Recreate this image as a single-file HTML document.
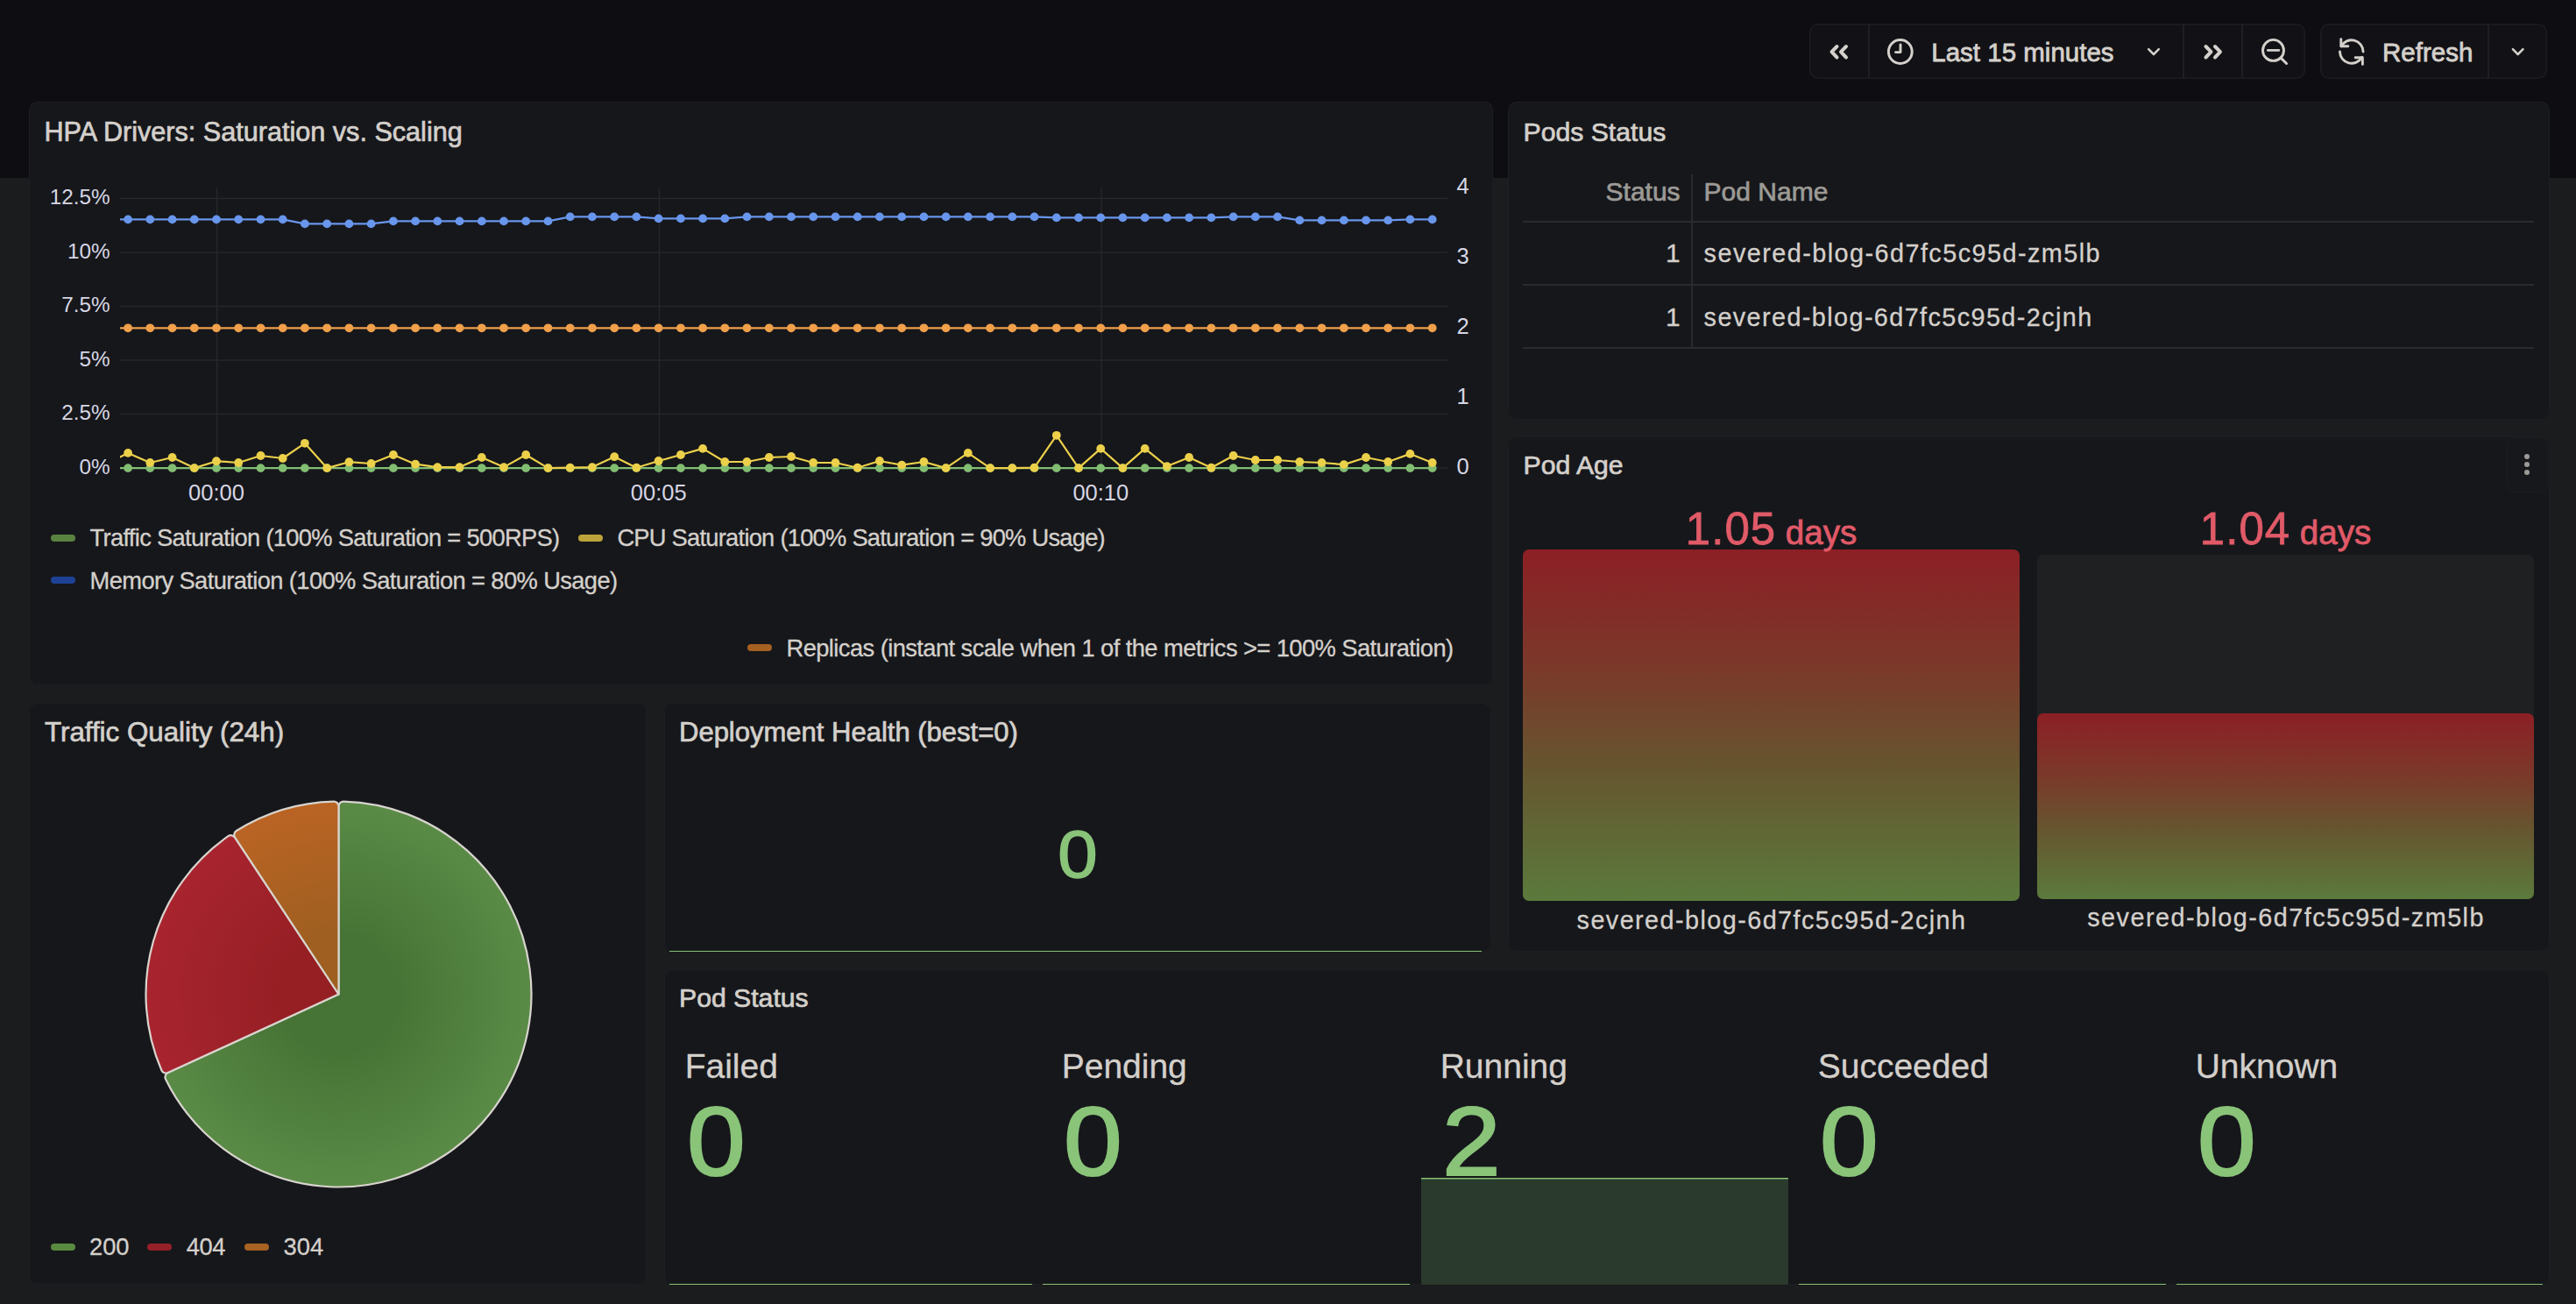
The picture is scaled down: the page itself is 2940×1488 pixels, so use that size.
<!DOCTYPE html><html><head><meta charset="utf-8"><style>
html,body{margin:0;padding:0}
body{width:2940px;height:1488px;position:relative;overflow:hidden;background:#1b1c1e;font-family:"Liberation Sans", sans-serif}
.pn{position:absolute;background:#16171b;border-radius:10px;box-shadow:inset 0 0 0 1px #1d1e22}
svg{position:absolute;left:0;top:0;overflow:visible}
</style></head><body>
<div style="position:absolute;left:0;top:0;width:2940px;height:203px;background:#0e0e12"></div>

<div style="position:absolute;left:2065px;top:27px;width:566px;height:63px;border-radius:10px;background:#121216;box-shadow:inset 0 0 0 1.5px #1d1d20"></div>
<div style="position:absolute;left:2648px;top:27px;width:259px;height:63px;border-radius:10px;background:#121216;box-shadow:inset 0 0 0 1.5px #1d1d20"></div>
<div style="position:absolute;left:2131.5px;top:27px;width:2px;height:63px;background:#1f1f22"></div>
<div style="position:absolute;left:2490.5px;top:27px;width:2px;height:63px;background:#1f1f22"></div>
<div style="position:absolute;left:2558px;top:27px;width:2px;height:63px;background:#1f1f22"></div>
<div style="position:absolute;left:2838.5px;top:27px;width:2px;height:63px;background:#1f1f22"></div>
<svg width="2940" height="120" viewBox="0 0 2940 120">
<g fill="none" stroke="#d4d0cb" stroke-linecap="round" stroke-linejoin="round">
<path d="M2096.5 53 L2090.5 59.2 L2096.5 65.5 M2107 53 L2101 59.2 L2107 65.5" stroke-width="4"/>
<circle cx="2168.8" cy="59" r="13.4" stroke-width="3"/>
<path d="M2169 51 V59.6 H2163.5" stroke-width="2.9"/>
<path d="M2452.2 56.2 L2458 62 L2463.8 56.2" stroke-width="2.5"/>
<path d="M2517.5 53 L2523.5 59.2 L2517.5 65.5 M2528 53 L2534 59.2 L2528 65.5" stroke-width="4"/>
<circle cx="2594.5" cy="57.4" r="12" stroke-width="2.9"/>
<path d="M2588.4 57.4 H2600.8" stroke-width="2.9"/>
<path d="M2603.2 66.1 L2609.6 72.5" stroke-width="2.9"/>
<path d="M2672.06 52.76 A13.3 13.3 0 0 1 2697.10 59.00 M2695.54 65.24 A13.3 13.3 0 0 1 2670.50 59.00" stroke-width="2.9"/>
<path d="M2671.8 44.6 V52.7 H2679.8" stroke-width="2.9"/>
<path d="M2688.2 65.7 H2696.4 V73.4" stroke-width="2.9"/>
<path d="M2867.9 56.2 L2873.7 62 L2879.5 56.2" stroke-width="2.5"/>
</g></svg>
<div style="position:absolute;top:45.43px;font-size:29.5px;line-height:29.5px;color:#d4d0cb;white-space:nowrap;-webkit-text-stroke:0.8px #d4d0cb;left:2204.30px;">Last 15 minutes</div>
<div style="position:absolute;top:45.43px;font-size:29.5px;line-height:29.5px;color:#d4d0cb;white-space:nowrap;-webkit-text-stroke:0.8px #d4d0cb;left:2719.00px;">Refresh</div>
<div class="pn" style="left:33px;top:116px;width:1671px;height:666px"></div>
<div class="pn" style="left:1720.5px;top:116px;width:1189.0px;height:362.5px"></div>
<div class="pn" style="left:1720.5px;top:497.5px;width:1189.0px;height:588.5px"></div>
<div class="pn" style="left:33px;top:802px;width:705px;height:664px"></div>
<div class="pn" style="left:757.5px;top:802px;width:944.5px;height:284px"></div>
<div class="pn" style="left:757.5px;top:1106px;width:2152.0px;height:360px"></div>
<div style="position:absolute;top:135.10px;font-size:30.6px;line-height:30.6px;color:#d4d0cb;white-space:nowrap;-webkit-text-stroke:0.7px #d4d0cb;left:50.50px;">HPA Drivers: Saturation vs. Scaling</div>
<div style="position:absolute;top:136.04px;font-size:30.2px;line-height:30.2px;color:#d4d0cb;white-space:nowrap;-webkit-text-stroke:0.7px #d4d0cb;left:1738.50px;">Pods Status</div>
<div style="position:absolute;top:516.04px;font-size:30.2px;line-height:30.2px;color:#d4d0cb;white-space:nowrap;-webkit-text-stroke:0.7px #d4d0cb;left:1738.50px;">Pod Age</div>
<div style="position:absolute;top:819.50px;font-size:31.3px;line-height:31.3px;color:#d4d0cb;white-space:nowrap;-webkit-text-stroke:0.7px #d4d0cb;left:51.00px;">Traffic Quality (24h)</div>
<div style="position:absolute;top:820.36px;font-size:31.0px;line-height:31.0px;color:#d4d0cb;white-space:nowrap;-webkit-text-stroke:0.7px #d4d0cb;left:775.00px;">Deployment Health (best=0)</div>
<div style="position:absolute;top:1124.14px;font-size:30.2px;line-height:30.2px;color:#d4d0cb;white-space:nowrap;-webkit-text-stroke:0.7px #d4d0cb;left:775.00px;">Pod Status</div>
<svg width="2940" height="800" viewBox="0 0 2940 800">
<g stroke="#26272b" stroke-width="1.5">
<line x1="137" y1="534.0" x2="1652" y2="534.0"/>
<line x1="137" y1="472.5" x2="1652" y2="472.5"/>
<line x1="137" y1="411.0" x2="1652" y2="411.0"/>
<line x1="137" y1="349.5" x2="1652" y2="349.5"/>
<line x1="137" y1="288.0" x2="1652" y2="288.0"/>
<line x1="137" y1="226.5" x2="1652" y2="226.5"/>
<line x1="247.6" y1="214" x2="247.6" y2="541"/>
<line x1="752.5" y1="214" x2="752.5" y2="541"/>
<line x1="1257.0" y1="214" x2="1257.0" y2="541"/>
</g>
<defs><clipPath id="pc"><rect x="137" y="180" width="1520" height="380"/></clipPath></defs>
<g clip-path="url(#pc)" transform="translate(0 0.6)">
<path d="M120.9 373.7 L146.1 373.7 L171.3 373.7 L196.6 373.7 L221.8 373.7 L247.0 373.7 L272.2 373.7 L297.5 373.7 L322.7 373.7 L347.9 373.7 L373.2 373.7 L398.4 373.7 L423.6 373.7 L448.9 373.7 L474.1 373.7 L499.3 373.7 L524.5 373.7 L549.8 373.7 L575.0 373.7 L600.2 373.7 L625.5 373.7 L650.7 373.7 L675.9 373.7 L701.2 373.7 L726.4 373.7 L751.6 373.7 L776.9 373.7 L802.1 373.7 L827.3 373.7 L852.5 373.7 L877.8 373.7 L903.0 373.7 L928.2 373.7 L953.5 373.7 L978.7 373.7 L1003.9 373.7 L1029.2 373.7 L1054.4 373.7 L1079.6 373.7 L1104.8 373.7 L1130.1 373.7 L1155.3 373.7 L1180.5 373.7 L1205.8 373.7 L1231.0 373.7 L1256.2 373.7 L1281.4 373.7 L1306.7 373.7 L1331.9 373.7 L1357.1 373.7 L1382.4 373.7 L1407.6 373.7 L1432.8 373.7 L1458.1 373.7 L1483.3 373.7 L1508.5 373.7 L1533.8 373.7 L1559.0 373.7 L1584.2 373.7 L1609.4 373.7 L1634.7 373.7" fill="none" stroke="#f0a04a" stroke-width="2.2" stroke-linejoin="round"/><circle cx="146.1" cy="373.7" r="4.9" fill="#f0a04a"/><circle cx="171.3" cy="373.7" r="4.9" fill="#f0a04a"/><circle cx="196.6" cy="373.7" r="4.9" fill="#f0a04a"/><circle cx="221.8" cy="373.7" r="4.9" fill="#f0a04a"/><circle cx="247.0" cy="373.7" r="4.9" fill="#f0a04a"/><circle cx="272.2" cy="373.7" r="4.9" fill="#f0a04a"/><circle cx="297.5" cy="373.7" r="4.9" fill="#f0a04a"/><circle cx="322.7" cy="373.7" r="4.9" fill="#f0a04a"/><circle cx="347.9" cy="373.7" r="4.9" fill="#f0a04a"/><circle cx="373.2" cy="373.7" r="4.9" fill="#f0a04a"/><circle cx="398.4" cy="373.7" r="4.9" fill="#f0a04a"/><circle cx="423.6" cy="373.7" r="4.9" fill="#f0a04a"/><circle cx="448.9" cy="373.7" r="4.9" fill="#f0a04a"/><circle cx="474.1" cy="373.7" r="4.9" fill="#f0a04a"/><circle cx="499.3" cy="373.7" r="4.9" fill="#f0a04a"/><circle cx="524.5" cy="373.7" r="4.9" fill="#f0a04a"/><circle cx="549.8" cy="373.7" r="4.9" fill="#f0a04a"/><circle cx="575.0" cy="373.7" r="4.9" fill="#f0a04a"/><circle cx="600.2" cy="373.7" r="4.9" fill="#f0a04a"/><circle cx="625.5" cy="373.7" r="4.9" fill="#f0a04a"/><circle cx="650.7" cy="373.7" r="4.9" fill="#f0a04a"/><circle cx="675.9" cy="373.7" r="4.9" fill="#f0a04a"/><circle cx="701.2" cy="373.7" r="4.9" fill="#f0a04a"/><circle cx="726.4" cy="373.7" r="4.9" fill="#f0a04a"/><circle cx="751.6" cy="373.7" r="4.9" fill="#f0a04a"/><circle cx="776.9" cy="373.7" r="4.9" fill="#f0a04a"/><circle cx="802.1" cy="373.7" r="4.9" fill="#f0a04a"/><circle cx="827.3" cy="373.7" r="4.9" fill="#f0a04a"/><circle cx="852.5" cy="373.7" r="4.9" fill="#f0a04a"/><circle cx="877.8" cy="373.7" r="4.9" fill="#f0a04a"/><circle cx="903.0" cy="373.7" r="4.9" fill="#f0a04a"/><circle cx="928.2" cy="373.7" r="4.9" fill="#f0a04a"/><circle cx="953.5" cy="373.7" r="4.9" fill="#f0a04a"/><circle cx="978.7" cy="373.7" r="4.9" fill="#f0a04a"/><circle cx="1003.9" cy="373.7" r="4.9" fill="#f0a04a"/><circle cx="1029.2" cy="373.7" r="4.9" fill="#f0a04a"/><circle cx="1054.4" cy="373.7" r="4.9" fill="#f0a04a"/><circle cx="1079.6" cy="373.7" r="4.9" fill="#f0a04a"/><circle cx="1104.8" cy="373.7" r="4.9" fill="#f0a04a"/><circle cx="1130.1" cy="373.7" r="4.9" fill="#f0a04a"/><circle cx="1155.3" cy="373.7" r="4.9" fill="#f0a04a"/><circle cx="1180.5" cy="373.7" r="4.9" fill="#f0a04a"/><circle cx="1205.8" cy="373.7" r="4.9" fill="#f0a04a"/><circle cx="1231.0" cy="373.7" r="4.9" fill="#f0a04a"/><circle cx="1256.2" cy="373.7" r="4.9" fill="#f0a04a"/><circle cx="1281.4" cy="373.7" r="4.9" fill="#f0a04a"/><circle cx="1306.7" cy="373.7" r="4.9" fill="#f0a04a"/><circle cx="1331.9" cy="373.7" r="4.9" fill="#f0a04a"/><circle cx="1357.1" cy="373.7" r="4.9" fill="#f0a04a"/><circle cx="1382.4" cy="373.7" r="4.9" fill="#f0a04a"/><circle cx="1407.6" cy="373.7" r="4.9" fill="#f0a04a"/><circle cx="1432.8" cy="373.7" r="4.9" fill="#f0a04a"/><circle cx="1458.1" cy="373.7" r="4.9" fill="#f0a04a"/><circle cx="1483.3" cy="373.7" r="4.9" fill="#f0a04a"/><circle cx="1508.5" cy="373.7" r="4.9" fill="#f0a04a"/><circle cx="1533.8" cy="373.7" r="4.9" fill="#f0a04a"/><circle cx="1559.0" cy="373.7" r="4.9" fill="#f0a04a"/><circle cx="1584.2" cy="373.7" r="4.9" fill="#f0a04a"/><circle cx="1609.4" cy="373.7" r="4.9" fill="#f0a04a"/><circle cx="1634.7" cy="373.7" r="4.9" fill="#f0a04a"/>
<path d="M120.9 249.8 L146.1 249.8 L171.3 249.8 L196.6 249.8 L221.8 249.8 L247.0 249.8 L272.2 249.8 L297.5 249.8 L322.7 249.8 L347.9 254.8 L373.2 254.8 L398.4 254.8 L423.6 254.8 L448.9 251.8 L474.1 251.8 L499.3 251.8 L524.5 251.8 L549.8 251.8 L575.0 251.8 L600.2 251.8 L625.5 251.8 L650.7 246.8 L675.9 246.8 L701.2 246.8 L726.4 246.8 L751.6 248.8 L776.9 248.8 L802.1 248.8 L827.3 248.8 L852.5 246.8 L877.8 246.8 L903.0 246.8 L928.2 246.8 L953.5 246.8 L978.7 246.8 L1003.9 246.8 L1029.2 246.8 L1054.4 246.8 L1079.6 246.8 L1104.8 246.8 L1130.1 246.8 L1155.3 246.8 L1180.5 246.8 L1205.8 247.8 L1231.0 247.8 L1256.2 247.8 L1281.4 247.8 L1306.7 247.8 L1331.9 247.8 L1357.1 247.8 L1382.4 247.8 L1407.6 246.8 L1432.8 246.8 L1458.1 246.8 L1483.3 250.8 L1508.5 250.8 L1533.8 250.8 L1559.0 250.8 L1584.2 250.8 L1609.4 249.8 L1634.7 249.8" fill="none" stroke="#6896ec" stroke-width="2.2" stroke-linejoin="round"/><circle cx="146.1" cy="249.8" r="4.9" fill="#6896ec"/><circle cx="171.3" cy="249.8" r="4.9" fill="#6896ec"/><circle cx="196.6" cy="249.8" r="4.9" fill="#6896ec"/><circle cx="221.8" cy="249.8" r="4.9" fill="#6896ec"/><circle cx="247.0" cy="249.8" r="4.9" fill="#6896ec"/><circle cx="272.2" cy="249.8" r="4.9" fill="#6896ec"/><circle cx="297.5" cy="249.8" r="4.9" fill="#6896ec"/><circle cx="322.7" cy="249.8" r="4.9" fill="#6896ec"/><circle cx="347.9" cy="254.8" r="4.9" fill="#6896ec"/><circle cx="373.2" cy="254.8" r="4.9" fill="#6896ec"/><circle cx="398.4" cy="254.8" r="4.9" fill="#6896ec"/><circle cx="423.6" cy="254.8" r="4.9" fill="#6896ec"/><circle cx="448.9" cy="251.8" r="4.9" fill="#6896ec"/><circle cx="474.1" cy="251.8" r="4.9" fill="#6896ec"/><circle cx="499.3" cy="251.8" r="4.9" fill="#6896ec"/><circle cx="524.5" cy="251.8" r="4.9" fill="#6896ec"/><circle cx="549.8" cy="251.8" r="4.9" fill="#6896ec"/><circle cx="575.0" cy="251.8" r="4.9" fill="#6896ec"/><circle cx="600.2" cy="251.8" r="4.9" fill="#6896ec"/><circle cx="625.5" cy="251.8" r="4.9" fill="#6896ec"/><circle cx="650.7" cy="246.8" r="4.9" fill="#6896ec"/><circle cx="675.9" cy="246.8" r="4.9" fill="#6896ec"/><circle cx="701.2" cy="246.8" r="4.9" fill="#6896ec"/><circle cx="726.4" cy="246.8" r="4.9" fill="#6896ec"/><circle cx="751.6" cy="248.8" r="4.9" fill="#6896ec"/><circle cx="776.9" cy="248.8" r="4.9" fill="#6896ec"/><circle cx="802.1" cy="248.8" r="4.9" fill="#6896ec"/><circle cx="827.3" cy="248.8" r="4.9" fill="#6896ec"/><circle cx="852.5" cy="246.8" r="4.9" fill="#6896ec"/><circle cx="877.8" cy="246.8" r="4.9" fill="#6896ec"/><circle cx="903.0" cy="246.8" r="4.9" fill="#6896ec"/><circle cx="928.2" cy="246.8" r="4.9" fill="#6896ec"/><circle cx="953.5" cy="246.8" r="4.9" fill="#6896ec"/><circle cx="978.7" cy="246.8" r="4.9" fill="#6896ec"/><circle cx="1003.9" cy="246.8" r="4.9" fill="#6896ec"/><circle cx="1029.2" cy="246.8" r="4.9" fill="#6896ec"/><circle cx="1054.4" cy="246.8" r="4.9" fill="#6896ec"/><circle cx="1079.6" cy="246.8" r="4.9" fill="#6896ec"/><circle cx="1104.8" cy="246.8" r="4.9" fill="#6896ec"/><circle cx="1130.1" cy="246.8" r="4.9" fill="#6896ec"/><circle cx="1155.3" cy="246.8" r="4.9" fill="#6896ec"/><circle cx="1180.5" cy="246.8" r="4.9" fill="#6896ec"/><circle cx="1205.8" cy="247.8" r="4.9" fill="#6896ec"/><circle cx="1231.0" cy="247.8" r="4.9" fill="#6896ec"/><circle cx="1256.2" cy="247.8" r="4.9" fill="#6896ec"/><circle cx="1281.4" cy="247.8" r="4.9" fill="#6896ec"/><circle cx="1306.7" cy="247.8" r="4.9" fill="#6896ec"/><circle cx="1331.9" cy="247.8" r="4.9" fill="#6896ec"/><circle cx="1357.1" cy="247.8" r="4.9" fill="#6896ec"/><circle cx="1382.4" cy="247.8" r="4.9" fill="#6896ec"/><circle cx="1407.6" cy="246.8" r="4.9" fill="#6896ec"/><circle cx="1432.8" cy="246.8" r="4.9" fill="#6896ec"/><circle cx="1458.1" cy="246.8" r="4.9" fill="#6896ec"/><circle cx="1483.3" cy="250.8" r="4.9" fill="#6896ec"/><circle cx="1508.5" cy="250.8" r="4.9" fill="#6896ec"/><circle cx="1533.8" cy="250.8" r="4.9" fill="#6896ec"/><circle cx="1559.0" cy="250.8" r="4.9" fill="#6896ec"/><circle cx="1584.2" cy="250.8" r="4.9" fill="#6896ec"/><circle cx="1609.4" cy="249.8" r="4.9" fill="#6896ec"/><circle cx="1634.7" cy="249.8" r="4.9" fill="#6896ec"/>
<path d="M120.9 533.5 L146.1 533.5 L171.3 533.5 L196.6 533.5 L221.8 533.5 L247.0 533.5 L272.2 533.5 L297.5 533.5 L322.7 533.5 L347.9 533.5 L373.2 533.5 L398.4 533.5 L423.6 533.5 L448.9 533.5 L474.1 533.5 L499.3 533.5 L524.5 533.5 L549.8 533.5 L575.0 533.5 L600.2 533.5 L625.5 533.5 L650.7 533.5 L675.9 533.5 L701.2 533.5 L726.4 533.5 L751.6 533.5 L776.9 533.5 L802.1 533.5 L827.3 533.5 L852.5 533.5 L877.8 533.5 L903.0 533.5 L928.2 533.5 L953.5 533.5 L978.7 533.5 L1003.9 533.5 L1029.2 533.5 L1054.4 533.5 L1079.6 533.5 L1104.8 533.5 L1130.1 533.5 L1155.3 533.5 L1180.5 533.5 L1205.8 533.5 L1231.0 533.5 L1256.2 533.5 L1281.4 533.5 L1306.7 533.5 L1331.9 533.5 L1357.1 533.5 L1382.4 533.5 L1407.6 533.5 L1432.8 533.5 L1458.1 533.5 L1483.3 533.5 L1508.5 533.5 L1533.8 533.5 L1559.0 533.5 L1584.2 533.5 L1609.4 533.5 L1634.7 533.5" fill="none" stroke="#82be72" stroke-width="2.2" stroke-linejoin="round"/><circle cx="146.1" cy="533.5" r="4.9" fill="#82be72"/><circle cx="171.3" cy="533.5" r="4.9" fill="#82be72"/><circle cx="196.6" cy="533.5" r="4.9" fill="#82be72"/><circle cx="221.8" cy="533.5" r="4.9" fill="#82be72"/><circle cx="247.0" cy="533.5" r="4.9" fill="#82be72"/><circle cx="272.2" cy="533.5" r="4.9" fill="#82be72"/><circle cx="297.5" cy="533.5" r="4.9" fill="#82be72"/><circle cx="322.7" cy="533.5" r="4.9" fill="#82be72"/><circle cx="347.9" cy="533.5" r="4.9" fill="#82be72"/><circle cx="373.2" cy="533.5" r="4.9" fill="#82be72"/><circle cx="398.4" cy="533.5" r="4.9" fill="#82be72"/><circle cx="423.6" cy="533.5" r="4.9" fill="#82be72"/><circle cx="448.9" cy="533.5" r="4.9" fill="#82be72"/><circle cx="474.1" cy="533.5" r="4.9" fill="#82be72"/><circle cx="499.3" cy="533.5" r="4.9" fill="#82be72"/><circle cx="524.5" cy="533.5" r="4.9" fill="#82be72"/><circle cx="549.8" cy="533.5" r="4.9" fill="#82be72"/><circle cx="575.0" cy="533.5" r="4.9" fill="#82be72"/><circle cx="600.2" cy="533.5" r="4.9" fill="#82be72"/><circle cx="625.5" cy="533.5" r="4.9" fill="#82be72"/><circle cx="650.7" cy="533.5" r="4.9" fill="#82be72"/><circle cx="675.9" cy="533.5" r="4.9" fill="#82be72"/><circle cx="701.2" cy="533.5" r="4.9" fill="#82be72"/><circle cx="726.4" cy="533.5" r="4.9" fill="#82be72"/><circle cx="751.6" cy="533.5" r="4.9" fill="#82be72"/><circle cx="776.9" cy="533.5" r="4.9" fill="#82be72"/><circle cx="802.1" cy="533.5" r="4.9" fill="#82be72"/><circle cx="827.3" cy="533.5" r="4.9" fill="#82be72"/><circle cx="852.5" cy="533.5" r="4.9" fill="#82be72"/><circle cx="877.8" cy="533.5" r="4.9" fill="#82be72"/><circle cx="903.0" cy="533.5" r="4.9" fill="#82be72"/><circle cx="928.2" cy="533.5" r="4.9" fill="#82be72"/><circle cx="953.5" cy="533.5" r="4.9" fill="#82be72"/><circle cx="978.7" cy="533.5" r="4.9" fill="#82be72"/><circle cx="1003.9" cy="533.5" r="4.9" fill="#82be72"/><circle cx="1029.2" cy="533.5" r="4.9" fill="#82be72"/><circle cx="1054.4" cy="533.5" r="4.9" fill="#82be72"/><circle cx="1079.6" cy="533.5" r="4.9" fill="#82be72"/><circle cx="1104.8" cy="533.5" r="4.9" fill="#82be72"/><circle cx="1130.1" cy="533.5" r="4.9" fill="#82be72"/><circle cx="1155.3" cy="533.5" r="4.9" fill="#82be72"/><circle cx="1180.5" cy="533.5" r="4.9" fill="#82be72"/><circle cx="1205.8" cy="533.5" r="4.9" fill="#82be72"/><circle cx="1231.0" cy="533.5" r="4.9" fill="#82be72"/><circle cx="1256.2" cy="533.5" r="4.9" fill="#82be72"/><circle cx="1281.4" cy="533.5" r="4.9" fill="#82be72"/><circle cx="1306.7" cy="533.5" r="4.9" fill="#82be72"/><circle cx="1331.9" cy="533.5" r="4.9" fill="#82be72"/><circle cx="1357.1" cy="533.5" r="4.9" fill="#82be72"/><circle cx="1382.4" cy="533.5" r="4.9" fill="#82be72"/><circle cx="1407.6" cy="533.5" r="4.9" fill="#82be72"/><circle cx="1432.8" cy="533.5" r="4.9" fill="#82be72"/><circle cx="1458.1" cy="533.5" r="4.9" fill="#82be72"/><circle cx="1483.3" cy="533.5" r="4.9" fill="#82be72"/><circle cx="1508.5" cy="533.5" r="4.9" fill="#82be72"/><circle cx="1533.8" cy="533.5" r="4.9" fill="#82be72"/><circle cx="1559.0" cy="533.5" r="4.9" fill="#82be72"/><circle cx="1584.2" cy="533.5" r="4.9" fill="#82be72"/><circle cx="1609.4" cy="533.5" r="4.9" fill="#82be72"/><circle cx="1634.7" cy="533.5" r="4.9" fill="#82be72"/>
<path d="M120.9 529.3 L146.1 516.3 L171.3 527.4 L196.6 521.4 L221.8 533.5 L247.0 525.6 L272.2 527.4 L297.5 519.4 L322.7 522.4 L347.9 505.2 L373.2 533.5 L398.4 526.6 L423.6 528.4 L448.9 518.4 L474.1 529.1 L499.3 532.5 L524.5 532.5 L549.8 521.4 L575.0 532.5 L600.2 518.4 L625.5 533.5 L650.7 533.1 L675.9 532.5 L701.2 520.6 L726.4 533.1 L751.6 525.4 L776.9 518.4 L802.1 511.3 L827.3 526.4 L852.5 526.4 L877.8 521.4 L903.0 520.4 L928.2 527.4 L953.5 527.4 L978.7 533.1 L1003.9 525.4 L1029.2 530.1 L1054.4 526.4 L1079.6 533.5 L1104.8 516.3 L1130.1 533.5 L1155.3 533.5 L1180.5 533.1 L1205.8 496.2 L1231.0 533.5 L1256.2 511.3 L1281.4 533.5 L1306.7 511.3 L1331.9 531.5 L1357.1 521.4 L1382.4 533.1 L1407.6 519.4 L1432.8 524.4 L1458.1 524.4 L1483.3 526.4 L1508.5 527.4 L1533.8 529.5 L1559.0 521.4 L1584.2 526.4 L1609.4 517.3 L1634.7 527.4" fill="none" stroke="#ecd04a" stroke-width="2.2" stroke-linejoin="round"/><circle cx="146.1" cy="516.3" r="4.9" fill="#ecd04a"/><circle cx="171.3" cy="527.4" r="4.9" fill="#ecd04a"/><circle cx="196.6" cy="521.4" r="4.9" fill="#ecd04a"/><circle cx="221.8" cy="533.5" r="4.9" fill="#ecd04a"/><circle cx="247.0" cy="525.6" r="4.9" fill="#ecd04a"/><circle cx="272.2" cy="527.4" r="4.9" fill="#ecd04a"/><circle cx="297.5" cy="519.4" r="4.9" fill="#ecd04a"/><circle cx="322.7" cy="522.4" r="4.9" fill="#ecd04a"/><circle cx="347.9" cy="505.2" r="4.9" fill="#ecd04a"/><circle cx="373.2" cy="533.5" r="4.9" fill="#ecd04a"/><circle cx="398.4" cy="526.6" r="4.9" fill="#ecd04a"/><circle cx="423.6" cy="528.4" r="4.9" fill="#ecd04a"/><circle cx="448.9" cy="518.4" r="4.9" fill="#ecd04a"/><circle cx="474.1" cy="529.1" r="4.9" fill="#ecd04a"/><circle cx="499.3" cy="532.5" r="4.9" fill="#ecd04a"/><circle cx="524.5" cy="532.5" r="4.9" fill="#ecd04a"/><circle cx="549.8" cy="521.4" r="4.9" fill="#ecd04a"/><circle cx="575.0" cy="532.5" r="4.9" fill="#ecd04a"/><circle cx="600.2" cy="518.4" r="4.9" fill="#ecd04a"/><circle cx="625.5" cy="533.5" r="4.9" fill="#ecd04a"/><circle cx="650.7" cy="533.1" r="4.9" fill="#ecd04a"/><circle cx="675.9" cy="532.5" r="4.9" fill="#ecd04a"/><circle cx="701.2" cy="520.6" r="4.9" fill="#ecd04a"/><circle cx="726.4" cy="533.1" r="4.9" fill="#ecd04a"/><circle cx="751.6" cy="525.4" r="4.9" fill="#ecd04a"/><circle cx="776.9" cy="518.4" r="4.9" fill="#ecd04a"/><circle cx="802.1" cy="511.3" r="4.9" fill="#ecd04a"/><circle cx="827.3" cy="526.4" r="4.9" fill="#ecd04a"/><circle cx="852.5" cy="526.4" r="4.9" fill="#ecd04a"/><circle cx="877.8" cy="521.4" r="4.9" fill="#ecd04a"/><circle cx="903.0" cy="520.4" r="4.9" fill="#ecd04a"/><circle cx="928.2" cy="527.4" r="4.9" fill="#ecd04a"/><circle cx="953.5" cy="527.4" r="4.9" fill="#ecd04a"/><circle cx="978.7" cy="533.1" r="4.9" fill="#ecd04a"/><circle cx="1003.9" cy="525.4" r="4.9" fill="#ecd04a"/><circle cx="1029.2" cy="530.1" r="4.9" fill="#ecd04a"/><circle cx="1054.4" cy="526.4" r="4.9" fill="#ecd04a"/><circle cx="1079.6" cy="533.5" r="4.9" fill="#ecd04a"/><circle cx="1104.8" cy="516.3" r="4.9" fill="#ecd04a"/><circle cx="1130.1" cy="533.5" r="4.9" fill="#ecd04a"/><circle cx="1155.3" cy="533.5" r="4.9" fill="#ecd04a"/><circle cx="1180.5" cy="533.1" r="4.9" fill="#ecd04a"/><circle cx="1205.8" cy="496.2" r="4.9" fill="#ecd04a"/><circle cx="1231.0" cy="533.5" r="4.9" fill="#ecd04a"/><circle cx="1256.2" cy="511.3" r="4.9" fill="#ecd04a"/><circle cx="1281.4" cy="533.5" r="4.9" fill="#ecd04a"/><circle cx="1306.7" cy="511.3" r="4.9" fill="#ecd04a"/><circle cx="1331.9" cy="531.5" r="4.9" fill="#ecd04a"/><circle cx="1357.1" cy="521.4" r="4.9" fill="#ecd04a"/><circle cx="1382.4" cy="533.1" r="4.9" fill="#ecd04a"/><circle cx="1407.6" cy="519.4" r="4.9" fill="#ecd04a"/><circle cx="1432.8" cy="524.4" r="4.9" fill="#ecd04a"/><circle cx="1458.1" cy="524.4" r="4.9" fill="#ecd04a"/><circle cx="1483.3" cy="526.4" r="4.9" fill="#ecd04a"/><circle cx="1508.5" cy="527.4" r="4.9" fill="#ecd04a"/><circle cx="1533.8" cy="529.5" r="4.9" fill="#ecd04a"/><circle cx="1559.0" cy="521.4" r="4.9" fill="#ecd04a"/><circle cx="1584.2" cy="526.4" r="4.9" fill="#ecd04a"/><circle cx="1609.4" cy="517.3" r="4.9" fill="#ecd04a"/><circle cx="1634.7" cy="527.4" r="4.9" fill="#ecd04a"/>
</g></svg>
<div style="position:absolute;top:520.93px;font-size:24.3px;line-height:24.3px;color:#d6d6e4;white-space:nowrap;right:2814.30px;">0%</div>
<div style="position:absolute;top:459.43px;font-size:24.3px;line-height:24.3px;color:#d6d6e4;white-space:nowrap;right:2814.30px;">2.5%</div>
<div style="position:absolute;top:397.93px;font-size:24.3px;line-height:24.3px;color:#d6d6e4;white-space:nowrap;right:2814.30px;">5%</div>
<div style="position:absolute;top:336.43px;font-size:24.3px;line-height:24.3px;color:#d6d6e4;white-space:nowrap;right:2814.30px;">7.5%</div>
<div style="position:absolute;top:274.93px;font-size:24.3px;line-height:24.3px;color:#d6d6e4;white-space:nowrap;right:2814.30px;">10%</div>
<div style="position:absolute;top:213.43px;font-size:24.3px;line-height:24.3px;color:#d6d6e4;white-space:nowrap;right:2814.30px;">12.5%</div>
<div style="position:absolute;top:519.91px;font-size:25.5px;line-height:25.5px;color:#d6d6e4;white-space:nowrap;left:1662.50px;">0</div>
<div style="position:absolute;top:440.21px;font-size:25.5px;line-height:25.5px;color:#d6d6e4;white-space:nowrap;left:1662.50px;">1</div>
<div style="position:absolute;top:360.41px;font-size:25.5px;line-height:25.5px;color:#d6d6e4;white-space:nowrap;left:1662.50px;">2</div>
<div style="position:absolute;top:280.31px;font-size:25.5px;line-height:25.5px;color:#d6d6e4;white-space:nowrap;left:1662.50px;">3</div>
<div style="position:absolute;top:200.41px;font-size:25.5px;line-height:25.5px;color:#d6d6e4;white-space:nowrap;left:1662.50px;">4</div>
<div style="position:absolute;top:550.41px;font-size:25.5px;line-height:25.5px;color:#d6d6e4;white-space:nowrap;left:-753.00px;width:2000px;text-align:center;">00:00</div>
<div style="position:absolute;top:550.41px;font-size:25.5px;line-height:25.5px;color:#d6d6e4;white-space:nowrap;left:-248.30px;width:2000px;text-align:center;">00:05</div>
<div style="position:absolute;top:550.41px;font-size:25.5px;line-height:25.5px;color:#d6d6e4;white-space:nowrap;left:256.30px;width:2000px;text-align:center;">00:10</div>
<div style="position:absolute;left:58px;top:609.6px;width:28px;height:8px;border-radius:4px;background:#5a8240"></div>
<div style="position:absolute;top:600.29px;font-size:27.3px;line-height:27.3px;color:#d4d0cb;white-space:nowrap;-webkit-text-stroke:0.3px #d4d0cb;letter-spacing:-0.687px;left:102.60px;">Traffic Saturation (100% Saturation = 500RPS)</div>
<div style="position:absolute;left:660px;top:609.6px;width:28px;height:8px;border-radius:4px;background:#bba43a"></div>
<div style="position:absolute;top:600.29px;font-size:27.3px;line-height:27.3px;color:#d4d0cb;white-space:nowrap;-webkit-text-stroke:0.3px #d4d0cb;letter-spacing:-0.749px;left:704.40px;">CPU Saturation (100% Saturation = 90% Usage)</div>
<div style="position:absolute;left:58px;top:658.3px;width:28px;height:8px;border-radius:4px;background:#1f4296"></div>
<div style="position:absolute;top:648.99px;font-size:27.3px;line-height:27.3px;color:#d4d0cb;white-space:nowrap;-webkit-text-stroke:0.3px #d4d0cb;letter-spacing:-0.607px;left:102.60px;">Memory Saturation (100% Saturation = 80% Usage)</div>
<div style="position:absolute;left:853px;top:735.3px;width:28px;height:8px;border-radius:4px;background:#a66022"></div>
<div style="position:absolute;top:725.99px;font-size:27.3px;line-height:27.3px;color:#d4d0cb;white-space:nowrap;-webkit-text-stroke:0.3px #d4d0cb;letter-spacing:-0.57px;left:897.50px;">Replicas (instant scale when 1 of the metrics &gt;= 100% Saturation)</div>
<div style="position:absolute;left:1738px;top:252px;width:1154px;height:2px;background:#2a2b2f"></div>
<div style="position:absolute;left:1738px;top:324px;width:1154px;height:2px;background:#2a2b2f"></div>
<div style="position:absolute;left:1738px;top:396px;width:1154px;height:2px;background:#2a2b2f"></div>
<div style="position:absolute;left:1930px;top:199px;width:2px;height:198px;background:#2a2b2f"></div>
<div style="position:absolute;top:203.60px;font-size:30px;line-height:30px;color:#9c9a95;white-space:nowrap;-webkit-text-stroke:0.7px #9c9a95;right:1022.40px;">Status</div>
<div style="position:absolute;top:203.60px;font-size:30px;line-height:30px;color:#9c9a95;white-space:nowrap;-webkit-text-stroke:0.7px #9c9a95;left:1944.60px;">Pod Name</div>
<div style="position:absolute;top:274.41px;font-size:30px;line-height:30px;color:#d4d0cb;white-space:nowrap;-webkit-text-stroke:0.3px #d4d0cb;right:1022.40px;">1</div>
<div style="position:absolute;top:275.42px;font-size:28.8px;line-height:28.8px;color:#d4d0cb;white-space:nowrap;-webkit-text-stroke:0.3px #d4d0cb;letter-spacing:1.45px;left:1944.60px;">severed-blog-6d7fc5c95d-zm5lb</div>
<div style="position:absolute;top:346.61px;font-size:30px;line-height:30px;color:#d4d0cb;white-space:nowrap;-webkit-text-stroke:0.3px #d4d0cb;right:1022.40px;">1</div>
<div style="position:absolute;top:347.62px;font-size:28.8px;line-height:28.8px;color:#d4d0cb;white-space:nowrap;-webkit-text-stroke:0.3px #d4d0cb;letter-spacing:1.4px;left:1944.60px;">severed-blog-6d7fc5c95d-2cjnh</div>
<div style="position:absolute;left:2860.5px;top:499px;width:47px;height:62.5px;border-radius:8px;background:#17181c;box-shadow:inset 0 0 0 1px #1c1d21"></div>
<div style="position:absolute;left:2881.0px;top:517.8px;width:6px;height:6px;border-radius:50%;background:#9c9a96"></div>
<div style="position:absolute;left:2881.0px;top:527.0px;width:6px;height:6px;border-radius:50%;background:#9c9a96"></div>
<div style="position:absolute;left:2881.0px;top:536.4px;width:6px;height:6px;border-radius:50%;background:#9c9a96"></div>
<div style="position:absolute;left:1738px;top:627px;width:567px;height:401px;border-radius:7px;background:linear-gradient(180deg,#8c1f25 0%,#7a3a2a 35%,#66552f 62%,#5b7a3c 100%)"></div>
<div style="position:absolute;left:2325px;top:633px;width:567px;height:393px;border-radius:7px;background:#1f2022"></div>
<div style="position:absolute;left:2325px;top:814px;width:567px;height:212px;border-radius:7px;background:linear-gradient(180deg,#8c1f25 0%,#7a3a2a 35%,#66552f 62%,#5b7a3c 100%)"></div>
<div style="position:absolute;left:1021.5px;width:2000px;text-align:center;top:579.1px;line-height:49px;color:#e05a68;white-space:nowrap;-webkit-text-stroke:0.8px #e05a68"><span style="font-size:51px;letter-spacing:1px">1.05</span><span style="font-size:38.5px"> days</span></div>
<div style="position:absolute;left:1608.5px;width:2000px;text-align:center;top:579.1px;line-height:49px;color:#e05a68;white-space:nowrap;-webkit-text-stroke:0.8px #e05a68"><span style="font-size:51px;letter-spacing:1px">1.04</span><span style="font-size:38.5px"> days</span></div>
<div style="position:absolute;top:1035.62px;font-size:28.8px;line-height:28.8px;color:#d4d0cb;white-space:nowrap;-webkit-text-stroke:0.3px #d4d0cb;letter-spacing:1.43px;left:1022.00px;width:2000px;text-align:center;">severed-blog-6d7fc5c95d-2cjnh</div>
<div style="position:absolute;top:1033.32px;font-size:28.8px;line-height:28.8px;color:#d4d0cb;white-space:nowrap;-webkit-text-stroke:0.3px #d4d0cb;letter-spacing:1.46px;left:1609.10px;width:2000px;text-align:center;">severed-blog-6d7fc5c95d-zm5lb</div>
<svg width="2940" height="1488" viewBox="0 0 2940 1488"><defs><radialGradient id="gG" cx="386.5" cy="1134.5" r="220" gradientUnits="userSpaceOnUse"><stop offset="0" stop-color="#467436"/><stop offset="0.3" stop-color="#467436"/><stop offset="1" stop-color="#5a8b46"/></radialGradient><radialGradient id="gR" cx="386.5" cy="1134.5" r="220" gradientUnits="userSpaceOnUse"><stop offset="0" stop-color="#961f24"/><stop offset="0.3" stop-color="#961f24"/><stop offset="1" stop-color="#a8242f"/></radialGradient><radialGradient id="gO" cx="386.5" cy="1134.5" r="220" gradientUnits="userSpaceOnUse"><stop offset="0" stop-color="#9e5f20"/><stop offset="0.3" stop-color="#9e5f20"/><stop offset="1" stop-color="#ba6424"/></radialGradient></defs><g stroke="#d8d4ce" stroke-width="2.2" stroke-linejoin="round"><path d="M386.5 1134.5 L386.50 920.07 A5.5 5.5 0 0 1 392.14 914.57 A220 220 0 1 1 189.05 1231.53 A5.5 5.5 0 0 1 191.69 1224.10 Z" fill="url(#gG)"/><path d="M386.5 1134.5 L191.69 1224.10 A5.5 5.5 0 0 1 184.34 1221.28 A220 220 0 0 1 260.41 954.22 A5.5 5.5 0 0 1 268.15 955.69 Z" fill="url(#gR)"/><path d="M386.5 1134.5 L268.15 955.69 A5.5 5.5 0 0 1 269.82 947.99 A220 220 0 0 1 380.86 914.57 A5.5 5.5 0 0 1 386.50 920.07 Z" fill="url(#gO)"/></g></svg>
<div style="position:absolute;left:58px;top:1418.8px;width:28px;height:8px;border-radius:4px;background:#5a8a40"></div>
<div style="position:absolute;top:1409.49px;font-size:27.3px;line-height:27.3px;color:#d4d0cb;white-space:nowrap;-webkit-text-stroke:0.3px #d4d0cb;left:102.00px;">200</div>
<div style="position:absolute;left:168.3px;top:1418.8px;width:28px;height:8px;border-radius:4px;background:#952027"></div>
<div style="position:absolute;top:1409.49px;font-size:27.3px;line-height:27.3px;color:#d4d0cb;white-space:nowrap;-webkit-text-stroke:0.3px #d4d0cb;letter-spacing:-0.4px;left:212.80px;">404</div>
<div style="position:absolute;left:279px;top:1418.8px;width:28px;height:8px;border-radius:4px;background:#a86222"></div>
<div style="position:absolute;top:1409.49px;font-size:27.3px;line-height:27.3px;color:#d4d0cb;white-space:nowrap;-webkit-text-stroke:0.3px #d4d0cb;left:323.60px;">304</div>
<div style="position:absolute;top:938.39px;font-size:75.5px;line-height:75.5px;color:#89c479;white-space:nowrap;-webkit-text-stroke:1.5px #89c479;left:229.80px;width:2000px;text-align:center;transform:scaleX(1.08);">0</div>
<div style="position:absolute;left:764px;top:1084.8px;width:927px;height:1.4px;background:#86c073"></div>
<div style="position:absolute;top:1196.99px;font-size:39px;line-height:39px;color:#d4d0cb;white-space:nowrap;-webkit-text-stroke:0.3px #d4d0cb;left:781.70px;">Failed</div>
<div style="position:absolute;left:764px;top:1464.5px;width:414px;height:1.4px;background:#86c073"></div>
<div style="position:absolute;top:1246.69px;font-size:112px;line-height:112px;color:#89c479;white-space:nowrap;-webkit-text-stroke:2.2px #89c479;left:784.20px;transform:scaleX(1.07);transform-origin:0 0;">0</div>
<div style="position:absolute;top:1196.99px;font-size:39px;line-height:39px;color:#d4d0cb;white-space:nowrap;-webkit-text-stroke:0.3px #d4d0cb;left:1211.70px;">Pending</div>
<div style="position:absolute;left:1190px;top:1464.5px;width:419px;height:1.4px;background:#86c073"></div>
<div style="position:absolute;top:1246.69px;font-size:112px;line-height:112px;color:#89c479;white-space:nowrap;-webkit-text-stroke:2.2px #89c479;left:1214.20px;transform:scaleX(1.07);transform-origin:0 0;">0</div>
<div style="position:absolute;top:1196.99px;font-size:39px;line-height:39px;color:#d4d0cb;white-space:nowrap;-webkit-text-stroke:0.3px #d4d0cb;left:1643.70px;">Running</div>
<div style="position:absolute;left:1622px;top:1344px;width:419px;height:122px;background:#2a3a2c;box-shadow:inset 0 1.4px 0 #86c073"></div>
<div style="position:absolute;top:1246.69px;font-size:112px;line-height:112px;color:#89c479;white-space:nowrap;-webkit-text-stroke:2.2px #89c479;left:1646.20px;transform:scaleX(1.07);transform-origin:0 0;">2</div>
<div style="position:absolute;top:1196.99px;font-size:39px;line-height:39px;color:#d4d0cb;white-space:nowrap;-webkit-text-stroke:0.3px #d4d0cb;left:2074.70px;">Succeeded</div>
<div style="position:absolute;left:2053px;top:1464.5px;width:419px;height:1.4px;background:#86c073"></div>
<div style="position:absolute;top:1246.69px;font-size:112px;line-height:112px;color:#89c479;white-space:nowrap;-webkit-text-stroke:2.2px #89c479;left:2077.20px;transform:scaleX(1.07);transform-origin:0 0;">0</div>
<div style="position:absolute;top:1196.99px;font-size:39px;line-height:39px;color:#d4d0cb;white-space:nowrap;-webkit-text-stroke:0.3px #d4d0cb;left:2505.70px;">Unknown</div>
<div style="position:absolute;left:2484px;top:1464.5px;width:418px;height:1.4px;background:#86c073"></div>
<div style="position:absolute;top:1246.69px;font-size:112px;line-height:112px;color:#89c479;white-space:nowrap;-webkit-text-stroke:2.2px #89c479;left:2508.20px;transform:scaleX(1.07);transform-origin:0 0;">0</div>
</body></html>
